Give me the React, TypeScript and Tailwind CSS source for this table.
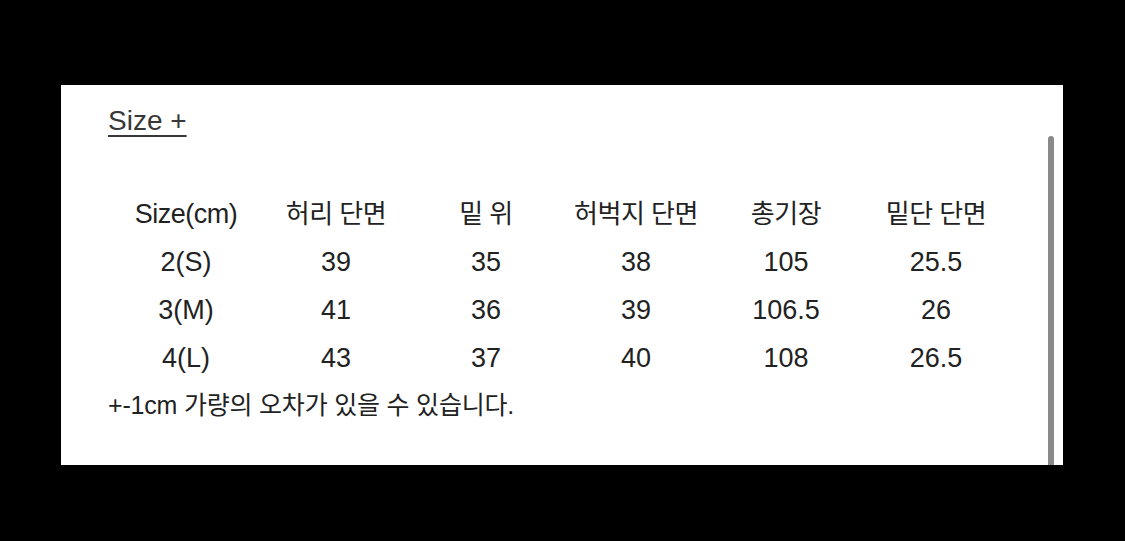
import React from 'react';

const headers = ['Size(cm)', '허리 단면', '밑 위', '허벅지 단면', '총기장', '밑단 단면'];

const rows = [
  ['2(S)', '39', '35', '38', '105', '25.5'],
  ['3(M)', '41', '36', '39', '106.5', '26'],
  ['4(L)', '43', '37', '40', '108', '26.5'],
];

const font = { fontFamily: '"Liberation Sans", Arial, "Noto Sans CJK KR", sans-serif' };

const App: React.FC = () => {
  return (
    <div className="w-[1125px] h-[541px] bg-black pt-[85px] pl-[61px]" style={font}>
      <div className="relative w-[1002px] h-[380px] bg-white pt-[20px] pl-[47px] text-[#222]">
        <h2 className="text-[28px] leading-[32px] text-[#383838] underline underline-offset-[5px] decoration-[2px]">
          Size +
        </h2>

        <div className="mt-[53px] ml-[3px]">
          <div className="grid grid-cols-[150px_150px_150px_150px_150px_150px] h-[48px] items-center text-center text-[26px] tracking-[-0.5px]">
            {headers.map((h) => (
              <div key={h} className={h === 'Size(cm)' ? 'text-[27px]' : ''}>
                {h}
              </div>
            ))}
          </div>
          {rows.map((r) => (
            <div
              key={r[0]}
              className="grid grid-cols-[150px_150px_150px_150px_150px_150px] h-[48px] items-center text-center text-[27px]"
            >
              {r.map((c, i) => (
                <div key={i}>{c}</div>
              ))}
            </div>
          ))}
        </div>

        <p className="h-[48px] flex items-center text-[25px] tracking-[-0.2px]">
          +-1cm 가량의 오차가 있을 수 있습니다.
        </p>

        {/* overlay scrollbar */}
        <div className="absolute right-[9px] top-[51px] bottom-0 w-[6px] rounded-t-full bg-[#8a8a8a]" />
      </div>
    </div>
  );
};

export default App;
